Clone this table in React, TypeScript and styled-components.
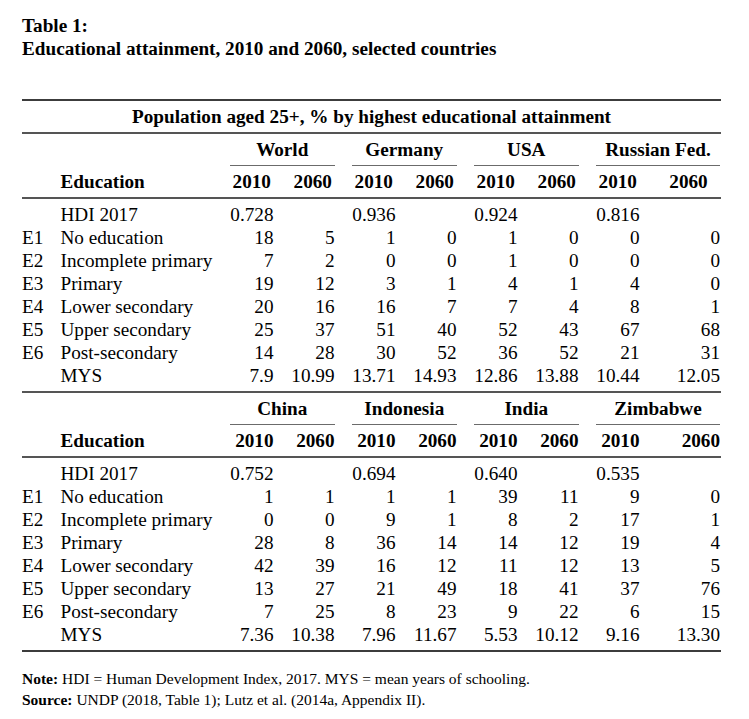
import React from "react";
import styled, { createGlobalStyle } from "styled-components";

const GlobalStyle = createGlobalStyle`
  html, body { margin: 0; padding: 0; background: #fff; }
  body {
    font-family: "Liberation Serif", "Times New Roman", serif;
    color: #000;
  }
`;

const COLS = "21px 152px repeat(7, 43.5px) 63px";

const Page = styled.div`
  padding: 14px 0 0 22px;
  width: 699px;
`;

const Caption = styled.div`
  font-weight: bold;
  font-size: 19.2px;
  line-height: 23px;
  margin-bottom: 39px;
`;

const Table = styled.div`
  display: flex;
  flex-direction: column;
  font-size: 19.2px;
`;

const Rule = styled.div<{ $h: number; $c: string }>`
  height: ${(p) => p.$h}px;
  background: ${(p) => p.$c};
`;

const SpanRow = styled.div`
  height: 31px;
  line-height: 31px;
  text-align: center;
  font-weight: bold;
`;

const GridRow = styled.div<{ $h: number }>`
  display: grid;
  grid-template-columns: ${COLS};
  column-gap: 17.5px;
  height: ${(p) => p.$h}px;
  line-height: ${(p) => p.$h}px;
  white-space: nowrap;
`;

const CountryHead = styled.div<{ $col: number }>`
  grid-column: ${(p) => p.$col} / span 2;
  line-height: 31px;
  height: 31px;
  border-bottom: 1px solid #6b6b6b;
  text-align: center;
  font-weight: bold;
`;

const HeadLabel = styled.div`
  grid-column: 2;
  font-weight: bold;
`;

const YearHead = styled.div<{ $align: "center" | "right" }>`
  font-weight: bold;
  text-align: ${(p) => p.$align};
`;

const DataBlock = styled.div`
  padding: 4px 0;
  display: flex;
  flex-direction: column;
`;

const Code = styled.div`
  grid-column: 1;
`;

const Label = styled.div`
  grid-column: 2;
`;

const Num = styled.div`
  text-align: right;
`;

const HdiNum = styled.div<{ $col: number }>`
  grid-column: ${(p) => p.$col};
  text-align: right;
`;

const Notes = styled.div`
  margin-top: 16px;
  font-size: 15.5px;
  line-height: 21px;
`;

const NoteLine = styled.div``;

type Section = {
  countries: string[];
  hdi: string[];
  rows: { code: string; label: string; vals: string[] }[];
  headAlign: "center" | "right";
  lastHeadAlign: "center" | "right";
};

const labels: [string, string][] = [
  ["E1", "No education"],
  ["E2", "Incomplete primary"],
  ["E3", "Primary"],
  ["E4", "Lower secondary"],
  ["E5", "Upper secondary"],
  ["E6", "Post-secondary"],
  ["", "MYS"],
];

const makeRows = (vals: string[][]) =>
  labels.map(([code, label], i) => ({ code, label, vals: vals[i] }));

const sections: Section[] = [
  {
    countries: ["World", "Germany", "USA", "Russian Fed."],
    hdi: ["0.728", "0.936", "0.924", "0.816"],
    headAlign: "center",
    lastHeadAlign: "center",
    rows: makeRows([
      ["18", "5", "1", "0", "1", "0", "0", "0"],
      ["7", "2", "0", "0", "1", "0", "0", "0"],
      ["19", "12", "3", "1", "4", "1", "4", "0"],
      ["20", "16", "16", "7", "7", "4", "8", "1"],
      ["25", "37", "51", "40", "52", "43", "67", "68"],
      ["14", "28", "30", "52", "36", "52", "21", "31"],
      ["7.9", "10.99", "13.71", "14.93", "12.86", "13.88", "10.44", "12.05"],
    ]),
  },
  {
    countries: ["China", "Indonesia", "India", "Zimbabwe"],
    hdi: ["0.752", "0.694", "0.640", "0.535"],
    headAlign: "right",
    lastHeadAlign: "right",
    rows: makeRows([
      ["1", "1", "1", "1", "39", "11", "9", "0"],
      ["0", "0", "9", "1", "8", "2", "17", "1"],
      ["28", "8", "36", "14", "14", "12", "19", "4"],
      ["42", "39", "16", "12", "11", "12", "13", "5"],
      ["13", "27", "21", "49", "18", "41", "37", "76"],
      ["7", "25", "8", "23", "9", "22", "6", "15"],
      ["7.36", "10.38", "7.96", "11.67", "5.53", "10.12", "9.16", "13.30"],
    ]),
  },
];

const SectionBlock: React.FC<{ s: Section }> = ({ s }) => (
  <>
    <GridRow $h={32}>
      {s.countries.map((c, i) => (
        <CountryHead key={c} $col={3 + i * 2}>
          {c}
        </CountryHead>
      ))}
    </GridRow>
    <GridRow $h={31}>
      <HeadLabel>Education</HeadLabel>
      {s.countries.map((c, i) => (
        <React.Fragment key={c}>
          <YearHead $align={s.headAlign}>2010</YearHead>
          <YearHead $align={i === 3 ? s.lastHeadAlign : s.headAlign}>2060</YearHead>
        </React.Fragment>
      ))}
    </GridRow>
    <Rule $h={2} $c="#555" />
    <DataBlock>
      <GridRow $h={23}>
        <Label>HDI 2017</Label>
        {s.hdi.map((h, i) => (
          <HdiNum key={i} $col={3 + i * 2}>
            {h}
          </HdiNum>
        ))}
      </GridRow>
      {s.rows.map((r) => (
        <GridRow $h={23} key={r.label}>
          <Code>{r.code}</Code>
          <Label>{r.label}</Label>
          {r.vals.map((v, i) => (
            <Num key={i}>{v}</Num>
          ))}
        </GridRow>
      ))}
    </DataBlock>
  </>
);

export default function App() {
  return (
    <>
      <GlobalStyle />
      <Page>
        <Caption>
          <div>Table 1:</div>
          <div>Educational attainment, 2010 and 2060, selected countries</div>
        </Caption>
        <Table>
          <Rule $h={2} $c="#3c3c3c" />
          <SpanRow>Population aged 25+, % by highest educational attainment</SpanRow>
          <Rule $h={2} $c="#555" />
          <SectionBlock s={sections[0]} />
          <Rule $h={2} $c="#555" />
          <SectionBlock s={sections[1]} />
          <Rule $h={2} $c="#3c3c3c" />
        </Table>
        <Notes>
          <NoteLine>
            <b>Note:</b> HDI = Human Development Index, 2017. MYS = mean years of schooling.
          </NoteLine>
          <NoteLine>
            <b>Source:</b> UNDP (2018, Table 1); Lutz et al. (2014a, Appendix II).
          </NoteLine>
        </Notes>
      </Page>
    </>
  );
}
